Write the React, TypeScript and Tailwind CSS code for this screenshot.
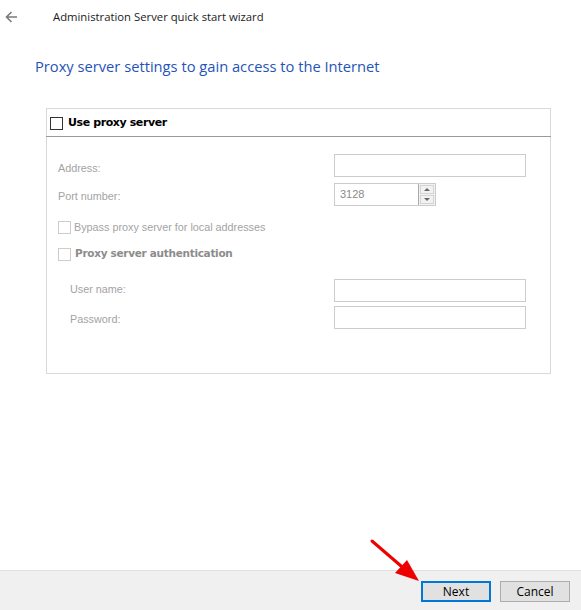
function Field({ className = "" }: { className?: string }) {
  return <div className={`h-[23px] border border-[#cccccc] bg-white ${className}`} />;
}

function Box({ dark = false }: { dark?: boolean }) {
  return (
    <span
      className={`inline-block w-[13px] h-[13px] border bg-white shrink-0 ${
        dark ? "border-[#333333]" : "border-[#cccccc]"
      }`}
    />
  );
}

export default function App() {
  return (
    <div className="w-[581px] h-[610px] bg-white flex flex-col relative font-['Liberation_Sans',sans-serif]">
      {/* Title bar */}
      <div className="h-[34px] flex items-center">
        <svg width="13" height="12" viewBox="0 0 13 12" className="ml-[5px] mr-[35px]">
          <path d="M12 6H1.5M6.5 1L1.5 6l5 5" stroke="#7a7a7a" strokeWidth="1.6" fill="none" />
        </svg>
        <span className="text-[11.3px] text-[#1a1a1a] font-['Open_Sans',sans-serif] mt-[1px]">
          Administration Server quick start wizard
        </span>
      </div>

      <h1 className="ml-[35px] mt-[21px] text-[14.7px] text-[#1f54b8] font-['Open_Sans',sans-serif] leading-[22px]">
        Proxy server settings to gain access to the Internet
      </h1>

      {/* Settings group */}
      <div className="ml-[46px] mt-[31px] w-[505px] h-[266px] border border-[#d9d9d9] flex flex-col">
        <div className="h-[28px] flex items-center gap-[5px] border-b border-[#9a9a9a] -mx-[1px] px-[4px] pt-[2px]">
          <Box dark />
          <span className="text-[11px] font-bold text-black font-['DejaVu_Sans',sans-serif] tracking-[-0.4px]">
            Use proxy server
          </span>
        </div>

        <div className="flex flex-col text-[10.8px] text-[#a3a3a3] pl-[11px] pr-[24px]">
          <div className="flex items-center justify-between mt-[17px]">
            <span className="mt-[5px]">Address:</span>
            <Field className="w-[192px]" />
          </div>
          <div className="flex items-center justify-between mt-[6px]">
            <span className="mt-[3px]">Port number:</span>
            <div className="w-[192px] flex">
              <div className="w-[102px] h-[23px] border border-[#cccccc] flex">
                <span className="flex-1 pl-[5px] text-[11px] text-[#8a8a8a] leading-[20px]">3128</span>
                <div className="w-[17px] border-l border-[#aaaaaa] flex flex-col bg-[#f2f2f2]">
                  <div className="flex-1 flex items-center justify-center border border-[#d4d4d4] m-[1px] mb-0">
                    <span className="w-0 h-0 border-l-[3px] border-r-[3px] border-b-[3px] border-l-transparent border-r-transparent border-b-[#666666]" />
                  </div>
                  <div className="flex-1 flex items-center justify-center border border-[#d4d4d4] m-[1px]">
                    <span className="w-0 h-0 border-l-[3px] border-r-[3px] border-t-[3px] border-l-transparent border-r-transparent border-t-[#666666]" />
                  </div>
                </div>
              </div>
            </div>
          </div>

          <div className="flex items-center gap-[3px] mt-[13px]">
            <Box />
            <span>Bypass proxy server for local addresses</span>
          </div>
          <div className="flex items-center gap-[4px] mt-[11px]">
            <Box />
            <span className="font-bold text-[#8c8c8c] font-['DejaVu_Sans',sans-serif] text-[10.5px] tracking-[-0.3px]">
              Proxy server authentication
            </span>
          </div>

          <div className="flex items-center justify-between mt-[17px] pl-[12px]">
            <span className="-mt-[3px]">User name:</span>
            <Field className="w-[192px]" />
          </div>
          <div className="flex items-center justify-between mt-[4px] pl-[12px]">
            <span className="mt-[4px]">Password:</span>
            <Field className="w-[192px]" />
          </div>
        </div>
      </div>

      <div className="flex-1" />

      {/* Footer */}
      <div className="h-[40px] bg-[#f0f0f0] border-t border-[#dfdfdf] flex items-start justify-end gap-[9px] pr-[11px] pt-[10px] font-['Open_Sans',sans-serif] text-[12px] text-black">
        <button className="w-[70px] h-[21px] bg-[#e1e1e1] border-2 border-[#0078d7] leading-[16px]">Next</button>
        <button className="w-[70px] h-[21px] bg-[#e1e1e1] border border-[#adadad] leading-[18px]">Cancel</button>
      </div>

      {/* Red pointer arrow */}
      <svg className="absolute left-[368px] top-[536px]" width="56" height="50" viewBox="0 0 56 50">
        <path d="M4 5L40 36" stroke="#ee0000" strokeWidth="3" strokeLinecap="round" />
        <path d="M51 45L27 37L39 24Z" fill="#ee0000" />
      </svg>
    </div>
  );
}
